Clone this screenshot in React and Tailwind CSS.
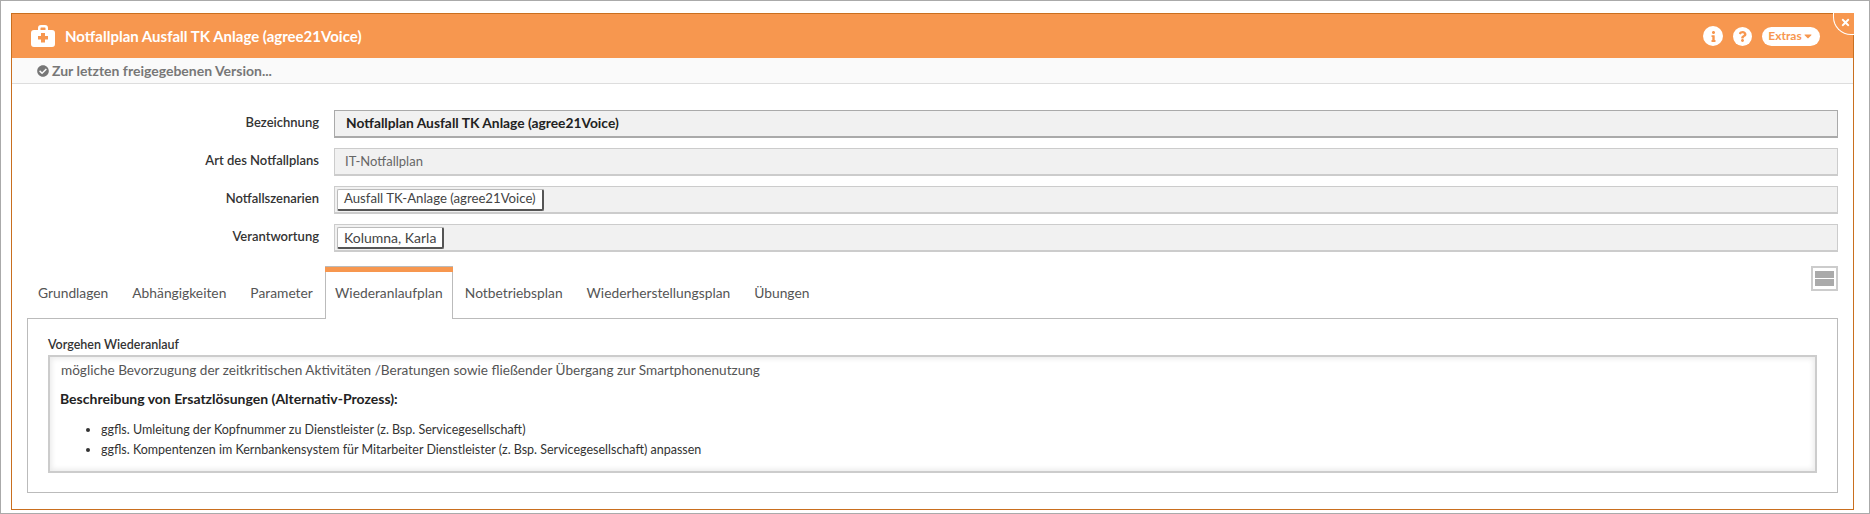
import { FaCheckCircle, FaInfo, FaQuestion, FaCaretDown, FaTimes } from 'react-icons/fa';

const tabs = ['Grundlagen', 'Abhängigkeiten', 'Parameter', 'Wiederanlaufplan', 'Notbetriebsplan', 'Wiederherstellungsplan', 'Übungen'];

const MedkitIcon = () => (
  <svg viewBox="0 0 24 22" className="w-[24px] h-[22px]" fill="#fff">
    <path fillRule="evenodd" d="M7 5V3a3 3 0 0 1 3-3h4a3 3 0 0 1 3 3v2h4a3 3 0 0 1 3 3v11a3 3 0 0 1-3 3H3a3 3 0 0 1-3-3V8a3 3 0 0 1 3-3h4zm2.5 0h5V3a.6.6 0 0 0-.6-.6h-3.800a.6.6 0 0 0-.6.6v2zM10 8v3H7v3.500h3v3h4v-3h3V11h-3V8h-4z" />
  </svg>
);

const Row = ({ label, className = '', fieldClass = 'border-[#ccc]', children }) => (
  <div className={`flex items-stretch ${className}`}>
    <div className="w-[308px] pr-[15px] text-right text-[13px] font-semibold text-[#333] leading-[25px]">{label}</div>
    <div className={`flex-1 flex items-center h-[28px] bg-[#f1f1f1] border border-b-2 pl-[2px] ${fieldClass}`}>{children}</div>
  </div>
);

const Chip = ({ className = '', children }) => (
  <span className={`h-[22px] px-[6px] flex items-center bg-white border border-[#bbb] border-r-2 border-b-2 border-r-[#555] border-b-[#555] rounded-[2px] text-[#444] ${className}`}>
    {children}
  </span>
);

export default function App() {
  return (
    <div className="h-[514px] border border-[#aaa] bg-white pt-[12px] pl-[10px] pr-[15px] pb-[4px]" style={{ fontFamily: '"Lato", "Noto Sans", sans-serif' }}>
      <div className="relative h-[497px] border border-[#c96f1f] flex flex-col">
        {/* Header */}
        <div className="h-[44px] bg-[#f7974f] flex items-center pl-[19px] pr-[33px] text-white">
          <MedkitIcon />
          <span className="ml-[10px] text-[15px] font-bold">Notfallplan Ausfall TK Anlage (agree21Voice)</span>
          <div className="ml-auto flex items-center">
            <span className="w-[20px] h-[20px] rounded-full bg-white flex items-center justify-center text-[#f7974f]"><FaInfo className="w-[11px] h-[11px]" /></span>
            <span className="ml-[10px] w-[19px] h-[19px] rounded-full bg-white flex items-center justify-center text-[#f7974f]"><FaQuestion className="w-[11px] h-[11px]" /></span>
            <span className="ml-[10px] w-[58px] h-[19px] rounded-full bg-white flex items-center justify-center text-[#f7974f] text-[12px] font-bold">
              Extras<FaCaretDown className="w-[12px] h-[12px]" />
            </span>
          </div>
        </div>
        <div className="absolute -top-px -right-px w-[21px] h-[22px] bg-[#f7974f] border-l border-b border-white rounded-bl-[18px] flex items-center justify-center text-white">
          <FaTimes className="w-[11px] h-[11px] ml-[3px] -mt-[2px]" />
        </div>

        {/* Toolbar */}
        <div className="h-[26px] bg-[#fafafa] border-b border-[#ddd] flex items-center pl-[25px] text-[#777] text-[14px] font-bold">
          <FaCheckCircle className="w-[12px] h-[12px] mr-[3px]" />
          Zur letzten freigegebenen Version...
        </div>

        {/* Form */}
        <div className="pt-[26px] pl-[14px] pr-[15px] flex-1 flex flex-col">
          <div>
            <Row label="Bezeichnung" fieldClass="border-[#aaa]"><span className="pl-[9px] text-[13.800px] font-bold text-[#222]">Notfallplan Ausfall TK Anlage (agree21Voice)</span></Row>
            <Row label="Art des Notfallplans" className="mt-[10px]"><span className="pl-[8px] text-[13px] text-[#666]">IT-Notfallplan</span></Row>
            <Row label="Notfallszenarien" className="mt-[10px]"><Chip className="text-[13.200px]">Ausfall TK-Anlage (agree21Voice)</Chip></Row>
            <Row label="Verantwortung" className="mt-[10px]"><Chip className="text-[14px]">Kolumna, Karla</Chip></Row>
          </div>

          {/* Tabs */}
          <div className="relative mt-[14px] h-[52px] flex items-stretch">
            {tabs.map((tab) =>
              tab === 'Wiederanlaufplan' ? (
                <div key={tab} className="relative z-10 w-[128px] h-[53px] border-x border-[#bbb] bg-white text-center text-[13.800px] text-[#555]">
                  <div className="h-[6px] -mx-px bg-[#f7974f] border-t border-[#bbb]" />
                  <div className="leading-[42px]">{tab}</div>
                </div>
              ) : (
                <div key={tab} className="px-[12px] pt-[6px] text-[13.800px] text-[#555] leading-[42px]">{tab}</div>
              )
            )}
            <div className="absolute right-0 top-0 w-[27px] h-[25px] border-2 border-[#ccc] flex flex-col justify-center gap-[1px] px-[2px]">
              <div className="h-[7px] bg-[#aaa]" />
              <div className="h-[7px] bg-[#aaa]" />
            </div>
          </div>

          {/* Tab content */}
          <div className="ml-[1px] h-[175px] border border-[#bbb] pt-[16px] px-[20px]">
            <div className="text-[12.500px] font-semibold text-[#333] leading-[20px]">Vorgehen Wiederanlauf</div>
            <div className="h-[118px] border-2 border-[#ccc] shadow-[inset_0_0_5px_2px_#ececec] bg-white pl-[10px] pt-[3px] text-[12.500px] text-[#555]">
              <p className="pl-[1px] text-[13.600px] leading-[20px]">mögliche Bevorzugung der zeitkritischen Aktivitäten /Beratungen sowie fließender Übergang zur Smartphonenutzung</p>
              <p className="mt-[9px] font-bold text-[14px] text-[#222] leading-[20px]">Beschreibung von Ersatzlösungen (Alternativ-Prozess):</p>
              <ul className="mt-[11px] list-disc pl-[41px] text-[#333]">
                <li className="leading-[20px]">ggfls. Umleitung der Kopfnummer zu Dienstleister (z. Bsp. Servicegesellschaft)</li>
                <li className="leading-[20px]">ggfls. Kompentenzen im Kernbankensystem für Mitarbeiter Dienstleister (z. Bsp. Servicegesellschaft) anpassen</li>
              </ul>
            </div>
          </div>
        </div>
      </div>
    </div>
  );
}
